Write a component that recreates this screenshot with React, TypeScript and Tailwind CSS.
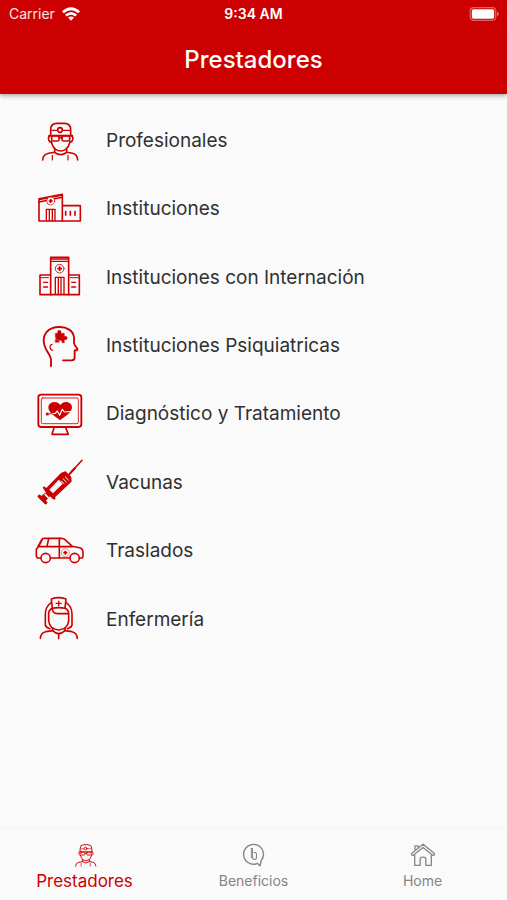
import type { ReactNode } from "react";

type IconProps = { className?: string };

function LineIcon({
  viewBox,
  className = "w-12 h-12",
  children,
}: {
  viewBox: string;
  className?: string;
  children: ReactNode;
}) {
  return (
    <svg
      viewBox={viewBox}
      className={`overflow-visible ${className}`}
      fill="none"
      stroke="currentColor"
      strokeWidth={4.8}
      strokeLinecap="round"
      strokeLinejoin="round"
      aria-hidden="true"
    >
      {children}
    </svg>
  );
}

function DoctorIcon({ className }: IconProps) {
  return (
    <LineIcon viewBox="30 22 144 144" className={className}>
      <path d="M77 78V60Q77 41 96 41H118Q137 41 137 60V78" />
      <path d="M80 62H95M115 62H134" strokeWidth={3.5} />
      <circle cx="105" cy="61" r="7" />
      <path d="M72 78H142M102 84H111" />
      <rect x="80" y="79" width="22" height="15" rx="4" />
      <rect x="111" y="79" width="23" height="15" rx="4" />
      <path d="M74 79Q69 82 71 90Q73 97 79 97M140 79Q145 82 143 90Q141 97 135 97" />
      <path d="M79 97Q82 111 92 119Q107 129 122 119Q132 111 135 97" />
      <path d="M89 118V128Q107 142 125 128V118" />
      <path d="M53 151Q54 134 71 131L89 128M158 151Q157 134 143 131L125 128" />
      <path d="M82 137V151M129 137V151" strokeWidth={3.5} />
    </LineIcon>
  );
}

function ClinicIcon() {
  return (
    <LineIcon viewBox="30 16 144 144">
      <path d="M42 64V121H166V75H113" />
      <path d="M112 51V121" />
      <path d="M42 54L112 41V50L42 64Z" />
      <path d="M44 57L110 44" strokeWidth={4} />
      <circle cx="77" cy="61" r="12" fill="#fafafa" strokeWidth={2} />
      <path d="M77 55V67M71 61H83" strokeWidth={5} strokeLinecap="butt" />
      <path d="M64 120V86H90V120M73 87V120M82 87V120" strokeWidth={4} />
      <path d="M122 90V105M136 90V105M150 90V105" strokeLinecap="butt" />
    </LineIcon>
  );
}

function HospitalIcon() {
  return (
    <LineIcon viewBox="30 23 144 144">
      <path d="M77 145V33H131V145" />
      <path d="M77 38H131M77 45H131" strokeWidth={4} />
      <path d="M76 86H45V145H163V86H132" />
      <path d="M48 94H70M136 94H160" strokeWidth={3} />
      <circle cx="104" cy="67" r="13" strokeWidth={2.5} />
      <path d="M104 60V74M97 67H111" strokeWidth={5} strokeLinecap="butt" />
      <path d="M91 144V93H117V144M100 94V144M108 94V144" strokeWidth={4} />
      <path d="M56 108H68M56 122H68M140 108H152M140 122H152" strokeWidth={4} />
    </LineIcon>
  );
}

function MindIcon() {
  return (
    <LineIcon viewBox="30 19 144 144">
      <path
        d="M78 152V132C78 121 68 111 62 99C55 84 54 64 64 50C74 37 88 34 104 34C126 34 144 45 147 64C149 75 144 80 149 88L157 99C159 102 157 104 149 104V125Q149 134 140 134H114"
        strokeWidth={5.5}
      />
      <path d="M81 86Q75 87 75 94Q76 104 83 104" strokeWidth={3.5} />
      <path
        d="M91 53H98Q96 44 103 44Q110 44 108 53H118V62Q127 60 127 67Q127 74 118 72V81H111Q112 74 106 74Q101 74 102 81L100 71Q91 72 91 64Z"
        fill="currentColor"
        strokeWidth={1}
      />
      <path d="M91 71H100V80H91Z" fill="currentColor" strokeWidth={1} />
    </LineIcon>
  );
}

function MonitorIcon() {
  return (
    <LineIcon viewBox="30 20 144 144">
      <rect x="40" y="31" width="129" height="97" rx="8" strokeWidth={5.5} />
      <rect x="49" y="41" width="111" height="77" rx="4" strokeWidth={2.5} />
      <path d="M87 130L81 150H130L122 130" />
      <path
        d="M105 108C92 97 70 86 70 69C70 52 96 46 106 62C116 46 141 52 141 69C141 86 118 97 105 108Z"
        fill="currentColor"
        stroke="none"
      />
      <path d="M68 89L91 87L97 80L104 93L112 75L118 83L143 81" stroke="#fafafa" strokeWidth={3.5} />
      <circle cx="67" cy="89" r="4.5" fill="currentColor" stroke="none" />
      <path d="M67 89L82 88" strokeWidth={2.5} />
    </LineIcon>
  );
}

function SyringeIcon() {
  return (
    <LineIcon viewBox="30 21 144 144">
      <path d="M171 25L137 62" strokeWidth={4.5} />
      <path d="M150 48L132 68" strokeWidth={6} />
      <path d="M121 60L137 76L138 88L84 139L60 115L110 64Z" fill="currentColor" strokeWidth={4} />
      <path d="M73 113L101 83L113 95L84 124Z" fill="#fafafa" stroke="none" />
      <path d="M109 87L117 95M115 81L124 90M121 75L130 84" stroke="#fafafa" strokeWidth={3} />
      <path d="M57 107L88 139" strokeWidth={7} />
      <path d="M67 121L76 130L60 147L48 135Z" fill="currentColor" strokeWidth={3} />
      <path d="M43 133L62 152" strokeWidth={10} />
      <path d="M61 128L69 136" stroke="#fafafa" strokeWidth={5} />
    </LineIcon>
  );
}

function CarIcon() {
  return (
    <LineIcon viewBox="30 9 144 144">
      <path d="M47 102H37L34 97V76L42 66L53 44Q54 43 58 43H110L119 46L142 67L167 72Q174 76 174 84V97L171 102H163" />
      <path d="M77 102H135M44 68H142M66 67L71 44M103 43V102" />
      <path d="M38 67L50 45" strokeWidth={3} />
      <circle cx="62" cy="102" r="14" />
      <circle cx="149" cy="102" r="14" />
      <circle cx="121" cy="86" r="12" strokeWidth={1.5} strokeDasharray="3 3" />
      <path d="M121 80V92M115 86H127" strokeWidth={5} strokeLinecap="butt" />
    </LineIcon>
  );
}

function NurseIcon() {
  return (
    <LineIcon viewBox="30 23 144 144">
      <path d="M79 32Q101 24 123 32L120 60Q101 56 82 60Z" />
      <path d="M101 37V54M92 45H110" strokeWidth={4} strokeLinecap="butt" />
      <path d="M79 43Q61 54 61 78V110Q63 118 75 121M123 43Q141 54 141 78V110Q139 118 127 121" />
      <path d="M82 60Q82 76 97 76H131M71 76V98Q74 123 101 125Q128 123 131 98V76M71 76Q71 65 82 60M131 76Q131 65 120 60" />
      <path d="M83 119V127Q101 145 120 127V119" />
      <path d="M46 150Q47 134 62 130L83 127M157 150Q156 134 141 130L120 127M101 138V151" />
    </LineIcon>
  );
}

function BenefitsIcon({ className }: IconProps) {
  return (
    <svg viewBox="0 0 24 24" className={className} fill="none" stroke="currentColor" strokeWidth={1.4} strokeLinejoin="round" aria-hidden="true">
      <path d="M15.5 20.4A9.9 9.9 0 1 1 19.2 17.6L18 22.8Z" />
      <path d="M8.8 5.5H10.4V14.6Q10.4 16.5 12.5 16.5Q14.5 16.5 14.5 14.6V11.4Q14.5 9.5 12.5 9.5H11.6" strokeWidth={1.1} />
      <path d="M9.4 5V15" strokeWidth={0.9} />
    </svg>
  );
}

function HomeIcon({ className }: IconProps) {
  return (
    <svg viewBox="0 0 24 24" className={className} fill="none" stroke="currentColor" strokeWidth={1.3} strokeLinejoin="round" aria-hidden="true">
      <path d="M12 1.2L.8 10.3Q.1 11.2.9 12Q1.7 12.8 2.6 12L12 4.5L21.4 12Q22.3 12.8 23.1 12Q23.9 11.2 23.2 10.3Z" />
      <path d="M3.7 12V22.3H9.2V15.8Q9.2 14.2 12 14.2Q14.8 14.2 14.8 15.8V22.3H20.3V12" />
      <path d="M4 7.4V2.8H7.2V4.9" />
    </svg>
  );
}

function StatusBar() {
  return (
    <div className="grid grid-cols-3 items-center h-7 px-2 text-sm">
      <div className="flex items-center gap-[7px] pl-px text-white/90">
        <span>Carrier</span>
        <svg viewBox="0 0 18 14" className="w-[18px] h-3.5" fill="white" aria-hidden="true">
          <path d="M0 4.2Q9-3.6 18 4.2L16.2 6.2Q9 .1 1.8 6.2Z" />
          <path d="M3 7.4Q9 2.4 15 7.4L13.2 9.4Q9 5.9 4.8 9.4Z" />
          <path d="M6 10.6Q9 8.3 12 10.6L9 13.8Z" />
        </svg>
      </div>
      <span className="text-center font-semibold">9:34 AM</span>
      <svg viewBox="0 0 30 14" className="w-[30px] h-3.5 justify-self-end" aria-hidden="true">
        <rect x="1.2" y=".7" width="25.6" height="12.6" rx="3.5" fill="none" stroke="white" strokeOpacity=".4" strokeWidth="1.2" />
        <rect x="2.8" y="2.3" width="22.4" height="9.4" rx="1.8" fill="white" />
        <path d="M28 4.8Q30 5.6 30 7Q30 8.4 28 9.2Z" fill="white" fillOpacity=".4" />
      </svg>
    </div>
  );
}

const providers = [
  { label: "Profesionales", icon: <DoctorIcon /> },
  { label: "Instituciones", icon: <ClinicIcon /> },
  { label: "Instituciones con Internación", icon: <HospitalIcon /> },
  { label: "Instituciones Psiquiatricas", icon: <MindIcon /> },
  { label: "Diagnóstico y Tratamiento", icon: <MonitorIcon /> },
  { label: "Vacunas", icon: <SyringeIcon /> },
  { label: "Traslados", icon: <CarIcon /> },
  { label: "Enfermería", icon: <NurseIcon /> },
];

export default function App() {
  return (
    <div className="flex flex-col min-h-screen bg-[#fafafa] font-['Inter',sans-serif] text-[#303030]">
      <header className="bg-[#cc0000] text-white shadow-[0_2px_4px_rgba(0,0,0,0.3)]">
        <StatusBar />
        <h1 className="pt-4 pb-[18px] text-center text-2xl font-medium">Prestadores</h1>
      </header>

      <main className="flex-1 pt-[13px]">
        <ul className="grid auto-rows-fr min-h-[547px]">
          {providers.map(({ label, icon }) => (
            <li key={label} className="flex">
              <a href="#" className="flex flex-1 items-center gap-[23px] px-[35px] text-[19px]">
                <span className="shrink-0 text-[#cc0000]">{icon}</span>
                {label}
              </a>
            </li>
          ))}
        </ul>
      </main>

      <nav className="grid grid-cols-3 h-[72px] border-t border-[#f5f5f5] text-sm text-[#858585]">
        <a href="#" aria-current="page" className="flex flex-col items-center pt-3 text-[17px] leading-6 text-[#cc0000]">
          <DoctorIcon className="w-7 h-7" />
          Prestadores
        </a>
        <a href="#" className="flex flex-col items-center gap-1 pt-3.5">
          <BenefitsIcon className="w-6 h-6" />
          Beneficios
        </a>
        <a href="#" className="flex flex-col items-center gap-1 pt-3.5">
          <HomeIcon className="w-6 h-6" />
          Home
        </a>
      </nav>
    </div>
  );
}
